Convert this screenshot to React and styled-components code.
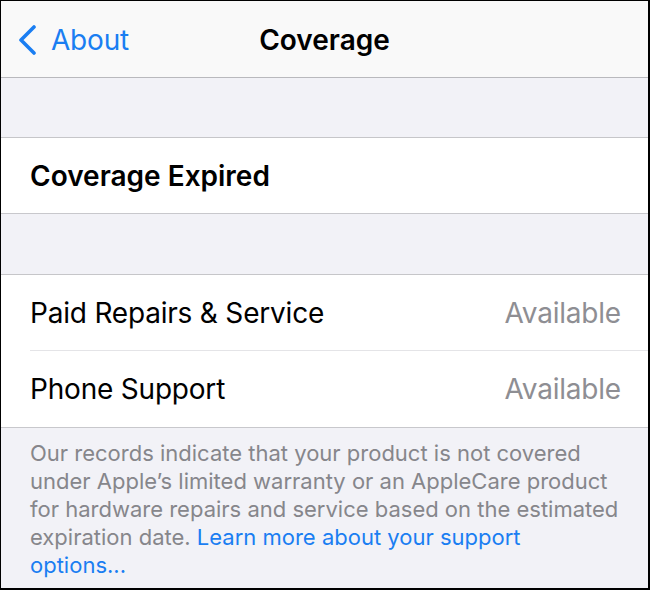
import React from "react";
import styled, { createGlobalStyle } from "styled-components";

const Global = createGlobalStyle`
  html, body { margin: 0; padding: 0; background: #fff; }
  * { box-sizing: border-box; }
`;

const Frame = styled.div`
  width: 650px;
  height: 590px;
  border-style: solid;
  border-color: #000;
  border-width: 1px 2px 2px 1px;
  background: #f2f2f7;
  font-family: Inter, "Liberation Sans", sans-serif;
  display: flex;
  flex-direction: column;
  overflow: hidden;
`;

const NavBar = styled.div`
  height: 77px;
  background: #f9f9f9;
  border-bottom: 1px solid #b9b9bd;
  display: grid;
  grid-template-columns: 1fr auto 1fr;
  align-items: center;
  flex-shrink: 0;
`;

const Back = styled.div`
  display: flex;
  align-items: center;
  gap: 13px;
  padding-left: 15px;
  color: #1a7ef2;
  font-size: 28px;
  letter-spacing: -0.2px;
  margin-top: 1px;
`;

const Title = styled.div`
  font-size: 28px;
  font-weight: 600;
  color: #000;
  margin-top: 1px;
`;

const Spacer = styled.div`
  height: ${(p) => p.$h}px;
  flex-shrink: 0;
  border-bottom: 1px solid #c6c6c9;
`;

const Group = styled.div`
  background: #fff;
  border-bottom: 1px solid #c8c8cc;
  flex-shrink: 0;
`;

const Row = styled.div`
  height: ${(p) => p.$h}px;
  display: flex;
  align-items: center;
  justify-content: space-between;
  padding: 0 27px 0 29px;
  position: relative;
  ${(p) =>
    p.$sep
      ? `&::after { content: ""; position: absolute; left: 29px; right: 0; bottom: 0; height: 1px; background: #e4e4e7; }`
      : ""}
`;

const Label = styled.span`
  font-size: 28px;
  color: #000;
  font-weight: ${(p) => (p.$bold ? 600 : 400)};
  letter-spacing: ${(p) => (p.$bold ? "0" : "-0.2px")};
`;

const Value = styled.span`
  font-size: 28px;
  color: #8e8e93;
  letter-spacing: -0.2px;
`;

const Footer = styled.div`
  padding: 11px 29px 0 29px;
  font-size: 22px;
  line-height: 28px;
  color: #86868b;
`;

const Link = styled.span`
  color: #1a7ef2;
`;

export default function App() {
  return (
    <>
      <Global />
      <Frame>
        <NavBar>
          <Back>
            <svg width="22" height="30" viewBox="0 0 22 30">
              <path
                d="M18 2 L5 15 L18 28"
                fill="none"
                stroke="#1a7ef2"
                strokeWidth="3.6"
                strokeLinecap="round"
                strokeLinejoin="round"
              />
            </svg>
            About
          </Back>
          <Title>Coverage</Title>
          <div />
        </NavBar>
        <Spacer $h={60} />
        <Group>
          <Row $h={75}>
            <Label $bold>Coverage Expired</Label>
          </Row>
        </Group>
        <Spacer $h={61} />
        <Group>
          <Row $h={76} $sep>
            <Label>Paid Repairs &amp; Service</Label>
            <Value>Available</Value>
          </Row>
          <Row $h={76}>
            <Label>Phone Support</Label>
            <Value>Available</Value>
          </Row>
        </Group>
        <Footer>
          Our records indicate that your product is not covered under Apple’s
          limited warranty or an AppleCare product for hardware repairs and
          service based on the estimated expiration date.{" "}
          <Link>Learn more about your support options...</Link>
        </Footer>
      </Frame>
    </>
  );
}
